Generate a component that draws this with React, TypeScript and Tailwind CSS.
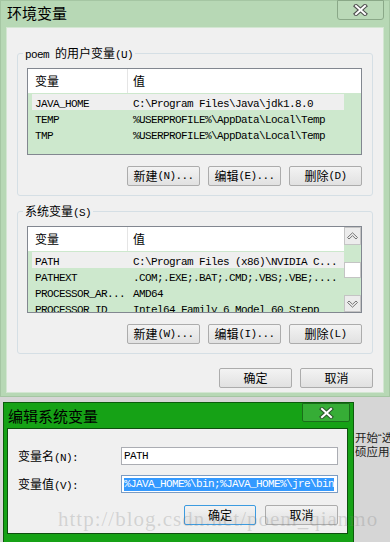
import React from "react";

const CJK = "font-['Noto_Sans_CJK_SC',sans-serif] text-[12px]";
const MONO =
  "font-['Liberation_Mono','Noto_Sans_CJK_SC',monospace] text-[11px] tracking-[-0.6px] whitespace-pre";

const CJK_RE = /[\u3000-\u9fff\uff00-\uffef]/;

function T({ s }: { s: string }) {
  const parts = s.match(/[\u3000-\u9fff\uff00-\uffef]+|[^\u3000-\u9fff\uff00-\uffef]+/g) || [];
  return (
    <>
      {parts.map((p, i) =>
        CJK_RE.test(p) ? (
          <span key={i} className={CJK}>
            {p}
          </span>
        ) : (
          <span key={i} className={MONO}>
            {p}
          </span>
        )
      )}
    </>
  );
}

function XIcon({ dark = "#3a3a3a" }: { dark?: string }) {
  return (
    <svg width="15" height="12" viewBox="0 0 15 12">
      <path d="M3 2 L12 10 M12 2 L3 10" stroke={dark} strokeWidth="4.2" strokeLinecap="square" fill="none" />
      <path d="M3 2 L12 10 M12 2 L3 10" stroke="#ffffff" strokeWidth="2" strokeLinecap="square" fill="none" />
    </svg>
  );
}

function Chevron({ down = false }: { down?: boolean }) {
  return (
    <svg width="11" height="8" viewBox="0 0 11 8" className={down ? "rotate-180" : ""}>
      <polygon
        points="0.5,5.5 5.5,0.8 10.5,5.5 9,7 5.5,3.7 2,7"
        fill="none"
        stroke="#6a6a6a"
        strokeWidth="0.9"
      />
    </svg>
  );
}

function Btn({ label, className = "" }: { label: string; className?: string }) {
  return (
    <div
      className={
        "h-[20px] flex items-center justify-center border rounded-[2px] bg-linear-to-b from-[#f3f3f3] to-[#e1e1e1] leading-[14px] " +
        className
      }
    >
      <T s={label} />
    </div>
  );
}

type Row = [string, string];

function VarList({ rows, scroll = false }: { rows: Row[]; scroll?: boolean }) {
  return (
    <div className="h-[87px] border border-[#828790] bg-[#cde8cd] flex overflow-hidden">
      <div className="w-[316px] flex flex-col shrink-0">
        <div className="h-[24px] shrink-0 bg-white flex leading-[14px]">
          <div className="w-[100px] border-r border-[#e5e5e5] pl-[7px] flex items-center">
            <span className={CJK}>变量</span>
          </div>
          <div className="flex-1 pl-[5px] flex items-center">
            <span className={CJK}>值</span>
          </div>
        </div>
        <div className="pt-[1px] flex flex-col">
          {rows.map((r, i) => (
            <div
              key={i}
              className={
                "h-[16px] ml-[4px] w-[312px] flex items-center leading-[14px] shrink-0 " +
                (i === 0 ? "bg-[#efefef]" : "")
              }
            >
              <div className="w-[96px] pl-[3px] overflow-hidden whitespace-nowrap">
                <T s={r[0]} />
              </div>
              <div className="flex-1 pl-[5px] overflow-hidden whitespace-nowrap">
                <T s={r[1]} />
              </div>
            </div>
          ))}
        </div>
      </div>
      {scroll ? (
        <div className="flex-1 flex flex-col">
          <div className="h-[18px] shrink-0 bg-[#ececec] border border-[#c4c4c4] flex items-center justify-center">
            <Chevron />
          </div>
          <div className="h-[17px] shrink-0" />
          <div className="h-[16px] shrink-0 bg-white border border-[#c4c4c4]" />
          <div className="flex-1" />
          <div className="h-[17px] shrink-0 bg-[#ececec] border border-[#c4c4c4] flex items-center justify-center">
            <Chevron down />
          </div>
        </div>
      ) : (
        <div className="flex-1 flex flex-col">
          <div className="h-[24px] bg-white" />
        </div>
      )}
    </div>
  );
}

function Group({
  label,
  children,
  className = "",
}: {
  label: string;
  children: React.ReactNode;
  className?: string;
}) {
  return (
    <div className={"border border-[#d5dfe5] rounded-[3px] pl-[9px] pr-[10px] pb-[9px] " + className}>
      <div className="-mt-[9px] -ml-[4px] w-fit px-[2px] bg-[#f0f0f0] leading-[14px]">
        <T s={label} />
      </div>
      {children}
    </div>
  );
}

const userRows: Row[] = [
  ["JAVA_HOME", "C:\\Program Files\\Java\\jdk1.8.0"],
  ["TEMP", "%USERPROFILE%\\AppData\\Local\\Temp"],
  ["TMP", "%USERPROFILE%\\AppData\\Local\\Temp"],
];

const sysRows: Row[] = [
  ["PATH", "C:\\Program Files (x86)\\NVIDIA C..."],
  ["PATHEXT", ".COM;.EXE;.BAT;.CMD;.VBS;.VBE;...."],
  ["PROCESSOR_AR...", "AMD64"],
  ["PROCESSOR_ID", "Intel64 Family 6 Model 60 Stepp"],
];

export default function App() {
  return (
    <div className="relative w-[390px] h-[542px] overflow-hidden bg-[#d6d6d6] text-black">
      {/* Main window */}
      <div className="h-[397px] flex flex-col bg-[#b7d8b5] border border-[#a5c6a3]">
        <div className="h-[26px] shrink-0 flex justify-between">
          <div className="pl-[6px] pt-[2px] text-[15px] leading-[20px] font-['Noto_Sans_CJK_SC',sans-serif]">
            环境变量
          </div>
          <div className="mr-[5px] -mt-[1px] w-[47px] h-[20px] border border-[#8aa888] rounded-b-[3px] bg-[#bad9b8] flex items-center justify-center">
            <XIcon dark="#505050" />
          </div>
        </div>
        <div className="flex-1 mx-[5px] mb-[3px] bg-[#f0f0f0] border border-[#d3e6d2] flex flex-col px-[10px] pt-[25px]">
          <Group label="poem 的用户变量(U)">
            <div className="mt-[6px]">
              <VarList rows={userRows} />
            </div>
            <div className="mt-[11px] flex justify-end gap-[8px]">
              <Btn label="新建(N)..." className="w-[73px] border-[#acacac]" />
              <Btn label="编辑(E)..." className="w-[73px] border-[#acacac]" />
              <Btn label="删除(D)" className="w-[73px] border-[#acacac]" />
            </div>
          </Group>
          <Group label="系统变量(S)" className="mt-[15px]">
            <div className="mt-[6px]">
              <VarList rows={sysRows} scroll />
            </div>
            <div className="mt-[11px] flex justify-end gap-[8px]">
              <Btn label="新建(W)..." className="w-[73px] border-[#acacac]" />
              <Btn label="编辑(I)..." className="w-[73px] border-[#acacac]" />
              <Btn label="删除(L)" className="w-[73px] border-[#acacac]" />
            </div>
          </Group>
          <div className="mt-[14px] flex justify-end gap-[8px]">
            <Btn label="确定" className="w-[73px] border-[#acacac]" />
            <Btn label="取消" className="w-[73px] border-[#acacac]" />
          </div>
        </div>
      </div>

      {/* Lower area: edit dialog */}
      <div className="flex">
        <div className="relative z-10 ml-[3px] mt-[5px] w-[351px] h-[145px] shrink-0 bg-[#16a216] border border-[#0c5c0c] flex flex-col">
          <div className="h-[25px] shrink-0 flex justify-between">
            <div className="pl-[4px] pt-[3px] text-[15px] leading-[20px] font-['Noto_Sans_CJK_SC',sans-serif]">
              编辑系统变量
            </div>
            <div className="mr-[3px] w-[48px] h-[19px] border border-[#1a6e1a] rounded-b-[2px] bg-[#36ad36] flex items-center justify-center">
              <XIcon dark="#2d5a2d" />
            </div>
          </div>
          <div className="ml-[3px] mr-[5px] h-[106px] shrink-0 bg-[#f0f0f0] border border-[#0e4f0e] pt-[18px] pl-[10px] pr-[8px] flex flex-col">
            <div className="flex items-center leading-[14px]">
              <div className="w-[103px]">
                <T s="变量名(N):" />
              </div>
              <div className="w-[217px] h-[18px] border border-[#abadb3] bg-white flex items-center pl-[2px] leading-[14px]">
                <T s="PATH" />
              </div>
            </div>
            <div className="mt-[10px] flex items-center leading-[14px]">
              <div className="w-[103px]">
                <T s="变量值(V):" />
              </div>
              <div className="w-[217px] h-[18px] border border-[#7a9cc4] bg-white flex items-center pl-[2px] pr-[1px] overflow-hidden">
                <div className="bg-[#3399ff] text-white h-[13px] flex items-center leading-[13px] whitespace-nowrap overflow-hidden">
                  <T s="%JAVA_HOME%\bin;%JAVA_HOME%\jre\bin" />
                </div>
              </div>
            </div>
            <div className="mt-[12px] mr-[1px] flex justify-end gap-[9px]">
              <Btn label="确定" className="w-[72px] h-[18px] border-[#3c9be0]" />
              <Btn label="取消" className="w-[73px] h-[18px] border-[#acacac]" />
            </div>
          </div>
        </div>
        <div className="pt-[34px] pl-[1px] flex flex-col leading-[13px] whitespace-nowrap text-[#222]">
          <div className="flex items-baseline">
            <span className="font-['Noto_Sans_CJK_SC',sans-serif] text-[11.5px]">开始</span>
            <span className="font-['Liberation_Sans',sans-serif] text-[11px]">&ldquo;</span>
            <span className="font-['Noto_Sans_CJK_SC',sans-serif] text-[11.5px]">选</span>
          </div>
          <span className="font-['Noto_Sans_CJK_SC',sans-serif] text-[11.5px]">硕应用杉</span>
        </div>
      </div>

      {/* Watermark */}
      <div className="absolute z-20 left-[58px] top-[506px] pointer-events-none whitespace-nowrap font-['Liberation_Serif',serif] text-[21px] leading-[26px] tracking-[1px] text-[rgba(120,120,120,0.25)]">
        http://blog.csdn.net/poem_qianmo
      </div>
    </div>
  );
}
